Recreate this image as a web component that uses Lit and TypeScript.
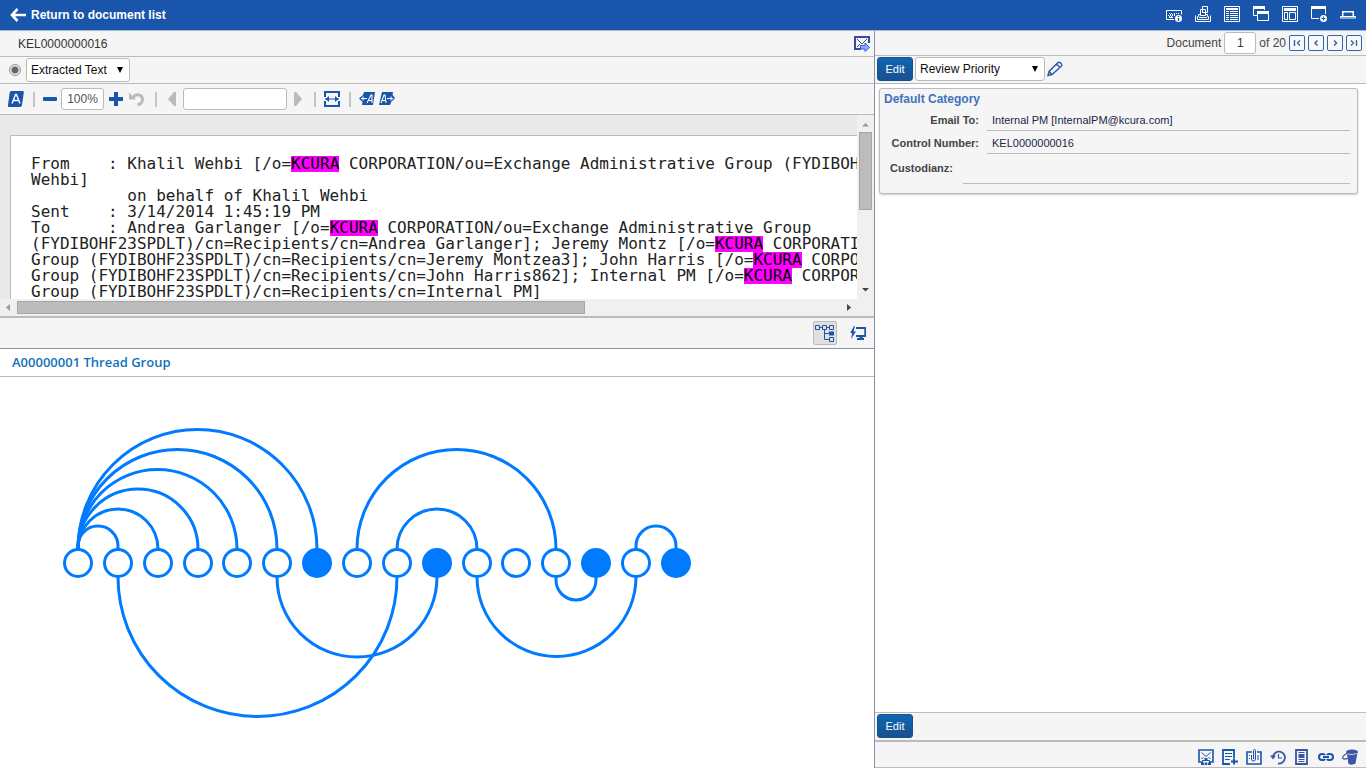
import { LitElement, html, svg, css, TemplateResult } from "lit";
import { customElement, property } from "lit/decorators.js";

const glyphs: Record<string, TemplateResult> = {
  back: svg`<path d="M7.500 2 2 8l5.500 6M2.500 8H16" fill="none" stroke="currentColor" stroke-width="2.600"/>`,
  keyboardInfo: svg`<path d="M8 13.500H.5v-9h15v4" fill="none" stroke="currentColor"/><path d="M3 7.500h1m1 0h1m2 0h1m1 0h1m1 0h1M2 9.500h1m1 0h1m1 0h1m1 0h1M3 11.500h4M4 8.500h1m1 0h1m1 0h1M3 10.500h1m1 0h1" stroke="currentColor" fill="none"/><circle cx="12.500" cy="12.500" r="3.500" fill="currentColor"/><path d="M12.500 10v1M12.500 12v3" stroke="#1955ab" stroke-width="1.300"/>`,
  stamp: svg`<path d="M5.500 9.500v-6h5v6zM7.500 6.500v-6h5v6zM5 8.500H3.500v2H2.500v3h11v-3h-1v-2H11M.5 9.500v6h15v-6M4 11.500h8" fill="none" stroke="currentColor"/>`,
  list: svg`<path d="M.5.5h15v15H.5z" fill="none" stroke="currentColor"/><path d="M2 3.500h12M2 5.500h3m1 0h8M2 7.500h3m1 0h8M2 9.500h3m1 0h8M2 11.500h3m1 0h8M2 13.500h3m1 0h8" stroke="currentColor"/><path d="M2 3h12" stroke="currentColor" stroke-width="2"/>`,
  windows: svg`<path d="M4 9.500H.5v-9h11V4M.5 2h11M4.500 5.500h11v9h-11zM4.500 7h11" fill="none" stroke="currentColor"/><path d="M0 1.500h12M4 6.500h12" stroke="currentColor" stroke-width="3"/>`,
  layout: svg`<path d="M.5.5h15v15H.5zM2.500 6.500h3v7h-3zM7.500 6.500h6v7h-6z" fill="none" stroke="currentColor"/><path d="M2 3.500h12" stroke="currentColor" stroke-width="3"/>`,
  windowAdd: svg`<path d="M8 12.500H.5V.5h14V8" fill="none" stroke="currentColor"/><path d="M0 1.500h15" stroke="currentColor" stroke-width="3"/><circle cx="12.500" cy="12.500" r="3.500" fill="currentColor"/><path d="M12.500 10.500v4M10.500 12.500h4" stroke="#1955ab"/>`,
  laptop: svg`<path d="M2.750 10V5.750h10.500V10" fill="none" stroke="currentColor" stroke-width="1.500"/><path d="M.5 10.500h15v1.500H.5z" fill="none" stroke="currentColor"/>`,
  mailSend: svg`<path d="M7 13H1V1h14v6" fill="none" stroke="currentColor" stroke-width="2"/><path d="m3 3 5 5 5-5M3 11l3-3" fill="none" stroke="currentColor"/><path d="M6.500 9.500H11V7l4.500 4.500L11 15.500V13H6.500z" fill="#8fabff" stroke="#3c62dc"/>`,
  markA: svg`<path d="M3.500 0H14.500Q16 0 15.800 1.500L14 14Q13.700 16 12 16H1.200Q-.2 16 0 14.500L1.600 2Q1.900 0 3.500 0z" fill="currentColor"/><path d="M4 12.500 7.600 3.500h.8l3.600 9M5.500 9.500h5" fill="none" stroke="#fff" stroke-width="1.400"/>`,
  minus: svg`<rect x="1" y="6" width="14" height="4" rx="1" fill="currentColor"/>`,
  plus: svg`<path d="M6 1h4v5h5v4h-5v5H6v-5H1V6h5z" fill="currentColor"/>`,
  undo: svg`<path d="M4 6.500C7 2.500 13.500 3 13.500 8.500c0 3.500-2.500 5-5 5" fill="none" stroke="currentColor" stroke-width="3"/><path d="M0 1.500v7h7z" fill="currentColor"/>`,
  previous: svg`<path d="M12 1v14h-2L4 8l6-7z" fill="currentColor"/>`,
  next: svg`<path d="M4 1v14h2l6-7-6-7z" fill="currentColor"/>`,
  fit: svg`<path d="M1 6V1h14v5M1 10v5h14v-5" fill="none" stroke="currentColor" stroke-width="2"/><path d="M1 8h14" stroke="currentColor"/><path d="M5 5 1.500 8 5 11zM11 5l3.500 3L11 11z" fill="currentColor"/>`,
  hitBefore: svg`<path d="M5 1h11l-2 13H3l.5-3L0 7.500 4 4z" fill="currentColor"/><path d="M2 7.500h6M4 5.500v4M8 12l4-8h1v8M9 9.500h4" fill="none" stroke="#fff" stroke-width="1.100"/>`,
  hitAfter: svg`<path d="M3 1h11l-.4 3L16 7l-3.500 3.500L11 14H0z" fill="currentColor"/><path d="m2 12 3-8h1l1 8M3 9.500h4M8 7.500h6M12 5.500v4" fill="none" stroke="#fff" stroke-width="1.100"/>`,
  pencil: svg`<path d="m1 14.500 1-4 8.500-8.500q1.500-1.500 3.300.2t.2 3.300L5 13.500zM9.500 3l3.500 3.500M2 10.500l3 3" fill="none" stroke="currentColor" stroke-width="1.500"/>`,
  first: svg`<path d="M4.500 4v6M10 4.500 7.500 7l2.500 2.500" fill="none" stroke="currentColor" stroke-width="1.400"/>`,
  prior: svg`<path d="M8.500 4.500 6 7l2.500 2.500" fill="none" stroke="currentColor" stroke-width="1.500"/>`,
  following: svg`<path d="M6 4.500 8.500 7 6 9.500" fill="none" stroke="currentColor" stroke-width="1.500"/>`,
  last: svg`<path d="M4 4.500 6.500 7 4 9.500M9.500 4v6" fill="none" stroke="currentColor" stroke-width="1.400"/>`,
  desktop: svg`<path d="M6 3h9.200v8H6" fill="none" stroke="currentColor" stroke-width="1.800"/><path d="M9.500 11h3v2H14v2H7v-2h2.500z" fill="currentColor"/><path d="M4 1 .2 8h2L1 14l5-7.500H3.500L5 1z" fill="currentColor"/>`,
  mailThread: svg`<path d="M4 13H1V1h14v12h-3" fill="none" stroke="currentColor" stroke-width="1.600"/><path d="m3.500 3.500 4.500 4 4.500-4M3.500 10l2-2m5 0 2 2M8 9v3" fill="none" stroke="currentColor"/><path d="M4.500 14v-2.500h7V14" fill="none" stroke="currentColor"/><path d="M3 13.500h3V16H3zM6.700 13.500h2.600V16H6.700zM10 13.500h3V16h-3zM6.500 9h3v2h-3z" fill="currentColor"/>`,
  noteAdd: svg`<path d="M8 15H1V1h11v8" fill="none" stroke="currentColor" stroke-width="1.800"/><path d="M3 4.500h7M3 7.500h7M3 10.500h5" stroke="currentColor"/><path d="M12 9.500v6M9 12.500h7" stroke="currentColor" stroke-width="2"/>`,
  clip: svg`<path d="M6 3H1v12h14V3h-4" fill="none" stroke="currentColor" stroke-width="1.600"/><path d="M7.500 10V1.500q0-1 1-1t1 1V10q0 2-2 2t-2-2V6M12 6v5M3 6.500h1m-1 3h1" fill="none" stroke="currentColor"/>`,
  history: svg`<path d="M3 7.500a6 6 0 1 1 5 7" fill="none" stroke="currentColor" stroke-width="1.800"/><path d="M0 6.500h6L3 10.500z" fill="currentColor"/><path d="M8.500 5v4H12" fill="none" stroke="currentColor" stroke-width="1.200"/>`,
  page: svg`<path d="M2 1h11v14H2z" fill="none" stroke="currentColor" stroke-width="1.800"/><path d="M4.500 3.500h6M4.500 10.500h6M4.500 12.500h6" stroke="currentColor"/><path d="M4.500 5h6v4h-6z" fill="currentColor"/>`,
  link: svg`<path d="M7 6Q6.500 5 5 5H4a3 3 0 0 0 0 6h1q1.500 0 2-1M9 6q.5-1 2-1h1a3 3 0 0 1 0 6h-1q-1.500 0-2-1M5 8h6" fill="none" stroke="currentColor" stroke-width="2"/>`,
  bucket: svg`<path d="M5 5 15.500 3 13.500 14.500Q10 16.500 6.500 15z" fill="currentColor"/><ellipse cx="10" cy="3" rx="6" ry="2.500" fill="currentColor"/><path d="M5 4Q-.5 8 1 9.500t5-.5" fill="none" stroke="currentColor" stroke-width="1.200"/><path d="M6 5q4 1.500 8.500-.5" fill="none" stroke="#c9d3ec"/>`,
};

const icon = (name: string) =>
  html`<svg class="icon" width="16" height="16" viewBox="0 0 16 16" aria-hidden="true">${glyphs[name]}</svg>`;

const smallIcon = (name: string) =>
  html`<svg class="icon" width="14" height="14" viewBox="0 0 14 14" aria-hidden="true">${glyphs[name]}</svg>`;

const iconButton = (name: string, label: string, extra = "") =>
  html`<button type="button" class="plain ${extra}" aria-label=${label} title=${label}>
    ${extra === "step" ? smallIcon(name) : icon(name)}
  </button>`;

const controls = css`
  * { box-sizing: border-box; }
  button, input, select { font: inherit; margin: 0; }
  .icon { display: block; flex: none; }
  .plain {
    display: flex;
    align-items: center;
    justify-content: center;
    flex: none;
    padding: 0;
    border: 0;
    background: none;
    color: inherit;
    cursor: pointer;
  }
  .field {
    height: 22px;
    border: 1px solid #bbb;
    border-radius: 3px;
    background: #fff;
    color: #333;
    padding: 0 5px;
    text-align: center;
  }
  .picker { display: grid; align-items: center; }
  .picker select, .picker svg { grid-area: 1 / 1; }
  .picker select {
    appearance: none;
    width: 100%;
    height: 24px;
    padding: 0 20px 0 4px;
    border: 1px solid #bbb;
    border-radius: 3px;
    background: #fff;
    color: #111;
  }
  .picker svg { justify-self: end; margin-right: 6px; pointer-events: none; }
`;

const caret = html`<svg width="8" height="8" viewBox="0 0 8 8" aria-hidden="true"><path d="M1 1h6L4 7z" fill="#000" /></svg>`;

interface Arc { from: number; to: number; side: "up" | "down"; }

@customElement("thread-diagram")
export class ThreadDiagram extends LitElement {
  static styles = css`
    :host { display: block; overflow: hidden; }
    svg { display: block; }
    .arc { fill: none; stroke: #007bff; stroke-width: 3; }
    .node { fill: #fff; stroke: #007bff; stroke-width: 3; }
    .filled { fill: #007bff; }
  `;

  @property({ type: Number }) count = 16;
  @property({ attribute: false }) filled = [6, 9, 13, 15];
  @property({ attribute: false }) arcs: Arc[] = [
    ...[1, 2, 3, 4, 5, 6].map((to) => ({ from: 0, to, side: "up" as const })),
    { from: 7, to: 12, side: "up" },
    { from: 8, to: 10, side: "up" },
    { from: 14, to: 15, side: "up" },
    { from: 1, to: 8, side: "down" },
    { from: 5, to: 9, side: "down" },
    { from: 10, to: 14, side: "down" },
    { from: 12, to: 13, side: "down" },
  ];

  private x(i: number) {
    return Math.round(78 + i * 39.85);
  }

  private arcPath({ from, to, side }: Arc) {
    const a = this.x(from);
    const b = this.x(to);
    const r = (b - a) / 2;
    const lift = to - from === 1 ? 3 : 0;
    const edge = side === "up" ? 172 : 200;
    const base = side === "up" ? edge - lift : edge + lift;
    return `M${a} ${edge}V${base}A${r} ${r} 0 0 ${side === "up" ? 1 : 0} ${b} ${base}V${edge}`;
  }

  render() {
    return html`<svg width="720" height="360" viewBox="0 0 720 360" role="img" aria-label="Thread group">
      ${this.arcs.map((arc) => svg`<path class="arc" d=${this.arcPath(arc)} />`)}
      ${Array.from({ length: this.count }, (_, i) => svg`<circle
        class=${this.filled.includes(i) ? "node filled" : "node"} cx=${this.x(i)} cy="186" r="13.5" />`)}
    </svg>`;
  }
}

const message = [
  "From    : Khalil Wehbi [/o=KCURA CORPORATION/ou=Exchange Administrative Group (FYDIBOHF",
  "Wehbi]",
  "          on behalf of Khalil Wehbi",
  "Sent    : 3/14/2014 1:45:19 PM",
  "To      : Andrea Garlanger [/o=KCURA CORPORATION/ou=Exchange Administrative Group",
  "(FYDIBOHF23SPDLT)/cn=Recipients/cn=Andrea Garlanger]; Jeremy Montz [/o=KCURA CORPORATION",
  "Group (FYDIBOHF23SPDLT)/cn=Recipients/cn=Jeremy Montzea3]; John Harris [/o=KCURA CORPORATION",
  "Group (FYDIBOHF23SPDLT)/cn=Recipients/cn=John Harris862]; Internal PM [/o=KCURA CORPORATION",
  "Group (FYDIBOHF23SPDLT)/cn=Recipients/cn=Internal PM]",
];

@customElement("document-viewer")
export class DocumentViewer extends LitElement {
  static styles = [
    controls,
    css`
      :host { display: flex; flex-direction: column; min-width: 0; background: #fff; }
      .bar {
        display: flex;
        align-items: center;
        flex: none;
        background: #f5f5f5;
        border-bottom: 1px solid #bbb;
        color: #1955ab;
      }
      .title { height: 26px; padding: 0 4px 0 18px; justify-content: space-between; color: #3a4aa0; }
      .name { color: #333; }
      .source { height: 27px; padding: 0 9px; gap: 5px; }
      .source .picker { width: 104px; }
      .radio {
        appearance: none;
        width: 12px;
        height: 12px;
        border: 1px solid #999;
        border-radius: 50%;
        background: radial-gradient(circle, #666 0 3px, #e6e6e6 4px);
      }
      .tools { height: 31px; padding: 0 8px; gap: 4px; }
      .muted { color: #bbb; }
      .rule { width: 2px; height: 15px; margin: 0 4px 0 5px; background: #c4c4c4; }
      .slim { width: 14px; }
      .medium { width: 18px; }
      .zoom { width: 43px; padding: 0; color: #555; }
      .search { width: 104px; }
      .frame {
        display: grid;
        grid-template-columns: minmax(0, 1fr) 17px;
        grid-template-rows: 184px 17px;
        flex: none;
        background: #f0f0f0;
        border-bottom: 2px solid #bbb;
      }
      .view { overflow: hidden; background: #e9e9e9; padding: 20px 0 0 10px; }
      .page {
        min-height: 100%;
        padding: 20px 0 20px 20px;
        border: 1px solid #bbb;
        border-right: 0;
        background: #fff;
        color: #222;
        font: 16px/16px "DejaVu Sans Mono", monospace;
        white-space: pre;
      }
      .line { display: flex; height: 16px; }
      .line mark { background: #f0f; color: #000; }
      .track { display: flex; align-items: center; justify-content: space-between; }
      .vertical { flex-direction: column; padding: 5px 0; }
      .horizontal { padding: 0 5px; }
      .thumb { background: #bcbcbc; border: 1px solid #a6a6a6; }
      .run { display: flex; flex: 1; }
      .vertical .run { flex-direction: column; padding-top: 3px; }
      .horizontal .run { padding-left: 6px; }
      .vertical .thumb { width: 13px; height: 51%; }
      .horizontal .thumb { height: 13px; width: 68.500%; }
      .panel { height: 31px; padding: 0 8px 0 0; gap: 13px; justify-content: flex-end; border-color: #8292a8; }
      .pressed { width: 24px; height: 24px; background: #e0e0e0; border: 1px solid #bbb; border-radius: 2px; }
      .heading {
        flex: none;
        height: 28px;
        margin: 0;
        padding: 0 12px;
        border-bottom: 1px solid #bbb;
        color: #1272b8;
        font: 600 13px/27px "Open Sans", sans-serif;
      }
      thread-diagram { flex: 1; }
    `,
  ];

  render() {
    return html`
      <div class="bar title"><span class="name">KEL0000000016</span>${iconButton("mailSend", "Email document")}</div>
      <div class="bar source">
        <input class="radio" type="radio" name="mode" checked aria-label="Extracted Text mode" />
        <div class="picker">
          <select aria-label="View mode"><option>Extracted Text</option></select>${caret}
        </div>
      </div>
      <div class="bar tools">
        ${iconButton("markA", "Highlights")}
        <span class="rule"></span>
        ${iconButton("minus", "Zoom out", "slim")}
        <input class="field zoom" aria-label="Zoom" value="100%" />
        ${iconButton("plus", "Zoom in")}
        ${iconButton("undo", "Reset zoom", "medium muted")}
        <span class="rule"></span>
        ${iconButton("previous", "Previous match", "slim muted")}
        <input class="field search" aria-label="Find in document" />
        ${iconButton("next", "Next match", "slim muted")}
        <span class="rule"></span>
        ${iconButton("fit", "Fit width")}
        <span class="rule"></span>
        ${iconButton("hitBefore", "Previous highlight")}
        ${iconButton("hitAfter", "Next highlight")}
      </div>
      <div class="frame">
        <div class="view">
          <div class="page">${message.map(
            (line) => html`<div class="line">${line
              .split("KCURA")
              .map((part, i) => html`${i ? html`<mark>KCURA</mark>` : ""}<span>${part}</span>`)}</div>`
          )}</div>
        </div>
        <div class="track vertical">
          <svg width="9" height="9" viewBox="0 0 9 9"><path d="M1 6.500h7L4.500 3z" fill="#999" /></svg>
          <div class="run"><div class="thumb"></div></div>
          <svg width="9" height="9" viewBox="0 0 9 9"><path d="M1 3h7L4.500 6.500z" fill="#444" /></svg>
        </div>
        <div class="track horizontal">
          <svg width="6" height="9" viewBox="0 0 6 9"><path d="M5 1v7L1 4.500z" fill="#999" /></svg>
          <div class="run"><div class="thumb"></div></div>
          <svg width="6" height="9" viewBox="0 0 6 9"><path d="M1 1v7l4-3.500z" fill="#444" /></svg>
        </div>
      </div>
      <div class="bar panel">
        <button type="button" class="plain pressed" aria-label="Thread group view" aria-pressed="true">
          <svg width="20" height="18" viewBox="0 0 20 18" aria-hidden="true">
            <path d="M.500 1.500h4v4h-4zM7.500 1.500h4v4h-4zM14.500 1.500h4v4h-4zM14.500 13.500h4v4h-4zM5 3.500h2M12 3.500h2M9.500 6v9.500h5M9.500 9.500h5" fill="none" stroke="currentColor"/>
            <path d="M14 7.500h5v4h-5z" fill="currentColor"/>
          </svg>
        </button>
        ${iconButton("desktop", "Launch viewer")}
      </div>
      <h2 class="heading">A00000001 Thread Group</h2>
      <thread-diagram></thread-diagram>
    `;
  }
}

@customElement("coding-pane")
export class CodingPane extends LitElement {
  static styles = [
    controls,
    css`
      :host {
        display: flex;
        flex-direction: column;
        min-width: 0;
        background: #fff;
        border-left: 1px solid #8a8fa8;
        color: #444;
      }
      .bar { display: flex; align-items: center; flex: none; background: #f5f5f5; border-bottom: 1px solid #bbb; }
      .pager { height: 25px; justify-content: flex-end; padding-right: 4px; gap: 3px; }
      .number { width: 32px; }
      .step { width: 16px; height: 16px; border: 1px solid #2f66b0; border-radius: 2px; color: #2f66b0; background: #f8f8f8; }
      .layouts { height: 28px; padding: 1px 2px 0; gap: 2px; align-items: flex-start; color: #2d5da8; }
      .layouts .picker { width: 130px; }
      .layouts .plain { height: 24px; }
      .edit {
        width: 36px;
        height: 24px;
        padding: 0;
        border: 1px solid #15508f;
        border-radius: 3px;
        background: linear-gradient(#0f66ae, #195093);
        color: #fff;
        font-size: 11px;
      }
      .body { flex: 1; padding: 4px 8px 4px 4px; }
      .card {
        padding: 0 7px 9px 10px;
        border: 1px solid #bbb;
        border-radius: 3px;
        background: #f5f5f5;
        box-shadow: 0 1px 2px #ccc;
        font-size: 11px;
      }
      .category { margin: 0 0 2px -6px; color: #3f72bc; font: bold 12px/20px "Liberation Sans", Arial, sans-serif; }
      .fields { display: grid; gap: 3px; margin: 0; line-height: 19px; }
      .entry { display: flex; gap: 8px; }
      .entry dt { font-weight: bold; min-width: 65px; }
      .entry dd { flex: 1; margin: 0; padding-left: 5px; min-height: 20px; border-bottom: 1px solid #bbb; color: #1a2744; }
      .wide dt { min-width: 89px; text-align: right; }
      .tall dd { min-height: 27px; }
      .tall dt { padding-top: 2px; }
      .foot { height: 30px; padding: 1px 2px 0; align-items: flex-start; border-top: 1px solid #bbb; border-bottom: 2px solid #bbb; }
      .actions { height: 26px; padding: 5px 8px 0; gap: 8px; justify-content: flex-end; color: #1955ab; }
      .violet { color: #3c55a4; }
    `,
  ];

  render() {
    return html`
      <div class="bar pager">
        <label for="position">Document</label>
        <input id="position" class="field number" value="1" />
        <span>of 20</span>
        ${iconButton("first", "First document", "step")}
        ${iconButton("prior", "Previous document", "step")}
        ${iconButton("following", "Next document", "step")}
        ${iconButton("last", "Last document", "step")}
      </div>
      <div class="bar layouts">
        <button type="button" class="edit">Edit</button>
        <div class="picker"><select aria-label="Layout"><option>Review Priority</option></select>${caret}</div>
        ${iconButton("pencil", "Edit layout")}
      </div>
      <div class="body">
        <section class="card">
          <h3 class="category">Default Category</h3>
          <dl class="fields">
            <div class="entry wide"><dt>Email To:</dt><dd>Internal PM [InternalPM@kcura.com]</dd></div>
            <div class="entry wide"><dt>Control Number:</dt><dd>KEL0000000016</dd></div>
            <div class="entry tall"><dt>Custodianz:</dt><dd></dd></div>
          </dl>
        </section>
      </div>
      <div class="bar foot"><button type="button" class="edit">Edit</button></div>
      <div class="bar actions">
        ${iconButton("mailThread", "Email thread")}
        ${iconButton("noteAdd", "Add note")}
        ${iconButton("clip", "Attachments")}
        ${iconButton("history", "Document history", "violet")}
        ${iconButton("page", "Similar documents", "violet")}
        ${iconButton("link", "Linked documents")}
        ${iconButton("bucket", "Production", "violet")}
      </div>
    `;
  }
}

@customElement("app-root")
export class AppRoot extends LitElement {
  static styles = [
    controls,
    css`
      :host {
        display: flex;
        flex-direction: column;
        height: 100vh;
        overflow: hidden;
        font: 12px/16px "Liberation Sans", Arial, sans-serif;
      }
      .top {
        display: flex;
        align-items: center;
        justify-content: space-between;
        flex: none;
        height: 31px;
        padding: 0 10px;
        border-bottom: 1px solid #a9b6cb;
        background: #1955ab;
        color: #fff;
      }
      .return { display: flex; align-items: center; gap: 5px; color: #fff; font-weight: bold; text-decoration: none; }
      .windows { display: flex; gap: 13px; margin-bottom: 2px; }
      .main { display: grid; grid-template-columns: 437fr 246fr; flex: 1; min-height: 0; }
    `,
  ];

  render() {
    return html`
      <header class="top">
        <a class="return" href="#">${icon("back")}Return to document list</a>
        <nav class="windows">
          ${iconButton("keyboardInfo", "Keyboard shortcuts")}
          ${iconButton("stamp", "Markup set")}
          ${iconButton("list", "Document list")}
          ${iconButton("windows", "Undock panes")}
          ${iconButton("layout", "Default layout")}
          ${iconButton("windowAdd", "Save layout")}
          ${iconButton("laptop", "Standalone viewer")}
        </nav>
      </header>
      <main class="main">
        <document-viewer></document-viewer>
        <coding-pane></coding-pane>
      </main>
    `;
  }
}
